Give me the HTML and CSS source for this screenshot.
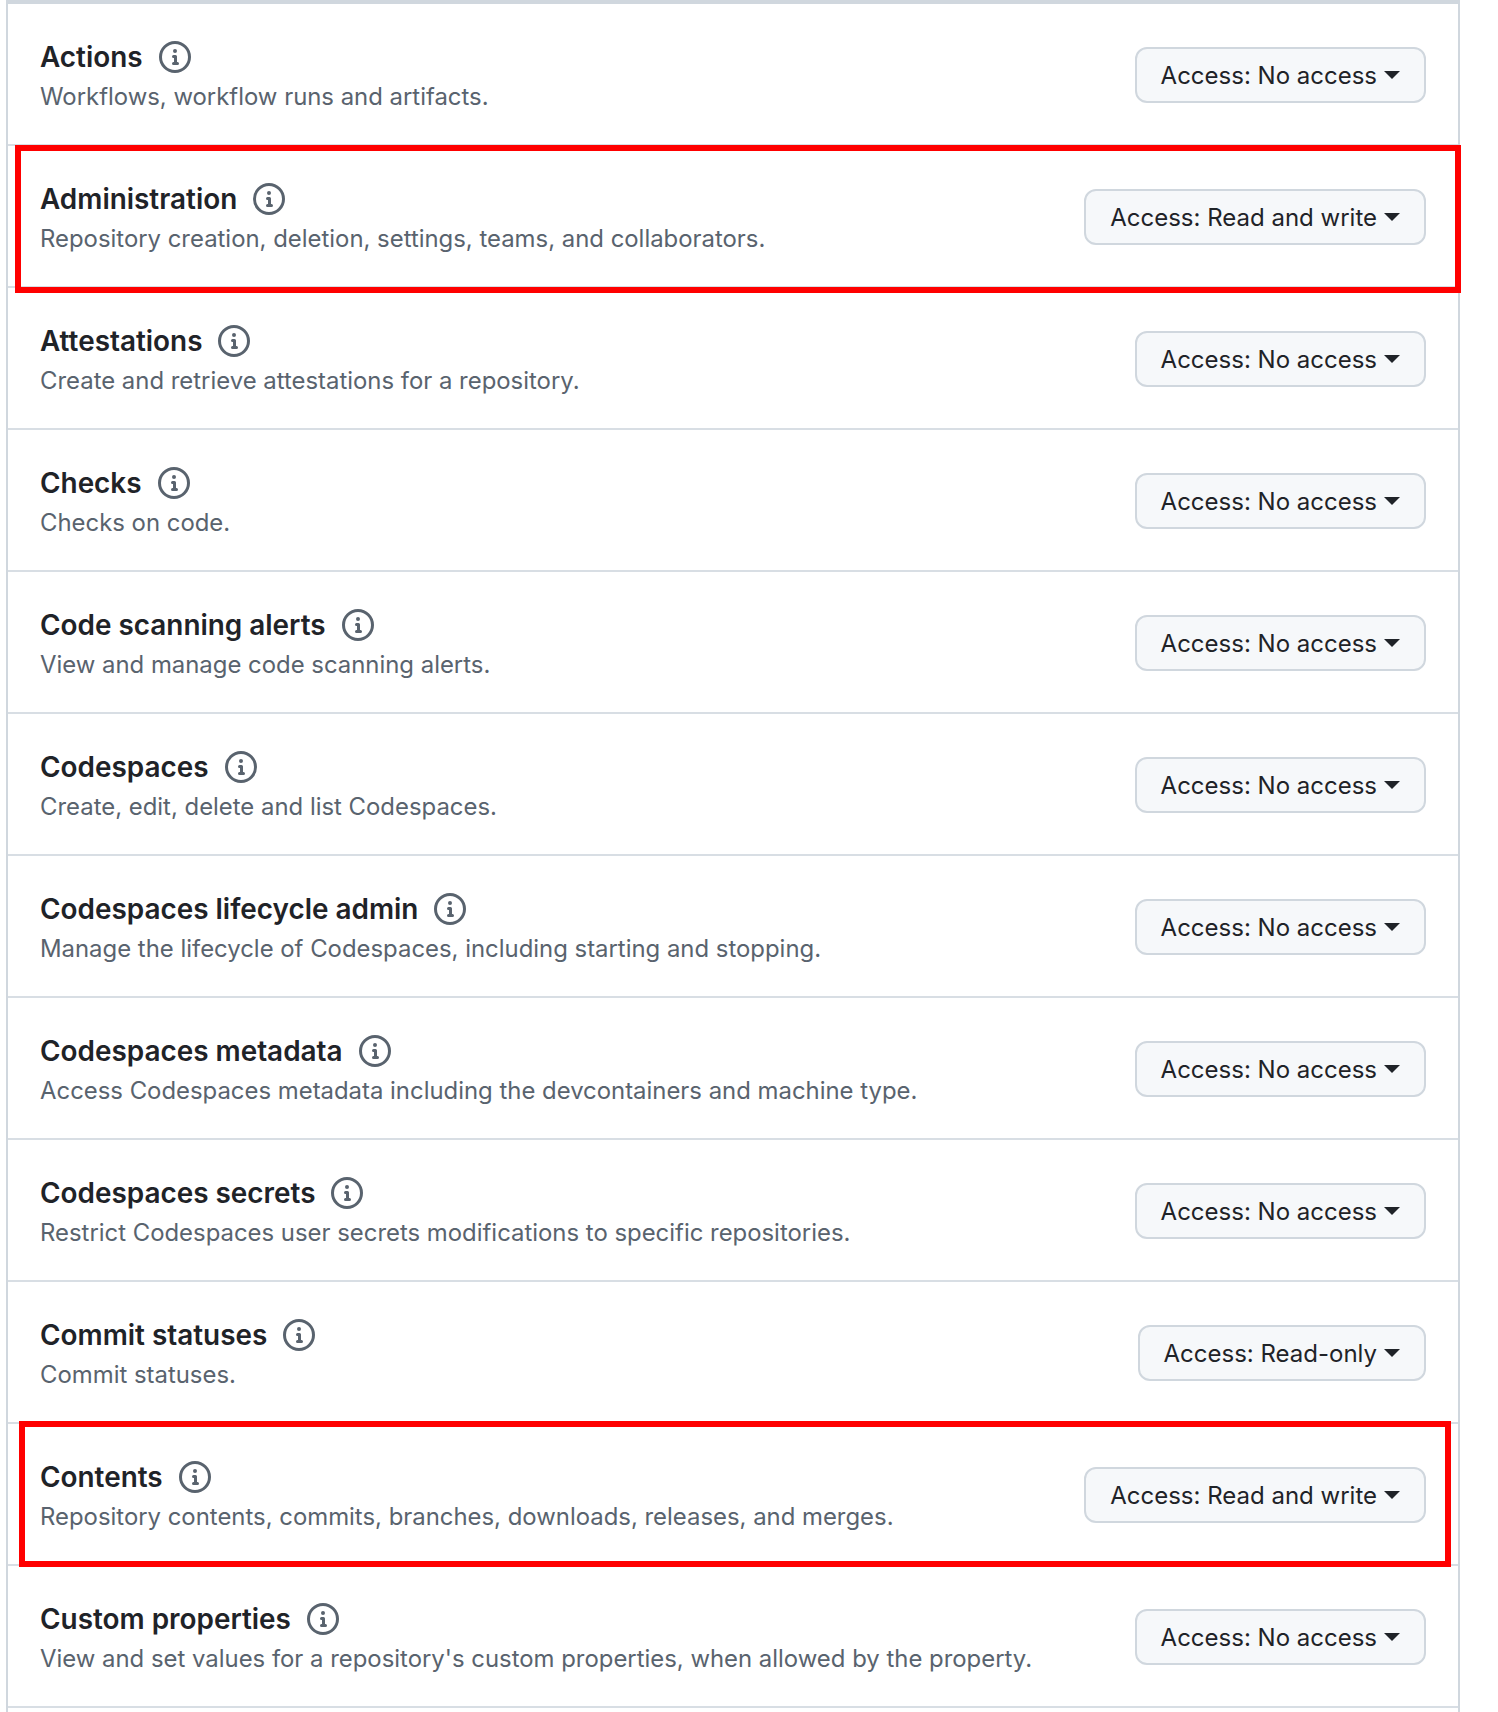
FILE: index.html
```html
<!DOCTYPE html>
<html lang="en">
<head>
  <meta charset="UTF-8" />
  <title>Repository permissions</title>
  <meta name="viewport" content="width=device-width, initial-scale=1" />
  <link rel="stylesheet" href="styles.css">
</head>
<body>
  <svg class="defs" aria-hidden="true">
    <symbol id="info" viewBox="0 0 16 16">
      <path d="M0 8a8 8 0 1 1 16 0A8 8 0 0 1 0 8Zm8-6.5a6.5 6.5 0 1 0 0 13 6.5 6.5 0 0 0 0-13ZM6.5 7.75A.75.75 0 0 1 7.25 7h1a.75.75 0 0 1 .75.75v2.75h.25a.75.75 0 0 1 0 1.5h-2a.75.75 0 0 1 0-1.5h.25v-2h-.25a.75.75 0 0 1-.75-.75ZM8 6a1 1 0 1 1 0-2 1 1 0 0 1 0 2Z"></path>
    </symbol>
  </svg>

  <div class="permissions">
    <div class="perm-row">
      <div class="perm-text">
        <div class="perm-title">Actions <svg class="info-icon"><use href="#info"></use></svg></div>
        <div class="perm-desc">Workflows, workflow runs and artifacts.</div>
      </div>
      <button class="access-btn">Access: No access<span class="caret"></span></button>
    </div>
    <div class="perm-row">
      <div class="perm-text">
        <div class="perm-title">Administration <svg class="info-icon"><use href="#info"></use></svg></div>
        <div class="perm-desc">Repository creation, deletion, settings, teams, and collaborators.</div>
      </div>
      <button class="access-btn">Access: Read and write<span class="caret"></span></button>
    </div>
    <div class="perm-row">
      <div class="perm-text">
        <div class="perm-title">Attestations <svg class="info-icon"><use href="#info"></use></svg></div>
        <div class="perm-desc">Create and retrieve attestations for a repository.</div>
      </div>
      <button class="access-btn">Access: No access<span class="caret"></span></button>
    </div>
    <div class="perm-row">
      <div class="perm-text">
        <div class="perm-title">Checks <svg class="info-icon"><use href="#info"></use></svg></div>
        <div class="perm-desc">Checks on code.</div>
      </div>
      <button class="access-btn">Access: No access<span class="caret"></span></button>
    </div>
    <div class="perm-row">
      <div class="perm-text">
        <div class="perm-title">Code scanning alerts <svg class="info-icon"><use href="#info"></use></svg></div>
        <div class="perm-desc">View and manage code scanning alerts.</div>
      </div>
      <button class="access-btn">Access: No access<span class="caret"></span></button>
    </div>
    <div class="perm-row">
      <div class="perm-text">
        <div class="perm-title">Codespaces <svg class="info-icon"><use href="#info"></use></svg></div>
        <div class="perm-desc">Create, edit, delete and list Codespaces.</div>
      </div>
      <button class="access-btn">Access: No access<span class="caret"></span></button>
    </div>
    <div class="perm-row">
      <div class="perm-text">
        <div class="perm-title">Codespaces lifecycle admin <svg class="info-icon"><use href="#info"></use></svg></div>
        <div class="perm-desc">Manage the lifecycle of Codespaces, including starting and stopping.</div>
      </div>
      <button class="access-btn">Access: No access<span class="caret"></span></button>
    </div>
    <div class="perm-row">
      <div class="perm-text">
        <div class="perm-title">Codespaces metadata <svg class="info-icon"><use href="#info"></use></svg></div>
        <div class="perm-desc">Access Codespaces metadata including the devcontainers and machine type.</div>
      </div>
      <button class="access-btn">Access: No access<span class="caret"></span></button>
    </div>
    <div class="perm-row">
      <div class="perm-text">
        <div class="perm-title">Codespaces secrets <svg class="info-icon"><use href="#info"></use></svg></div>
        <div class="perm-desc">Restrict Codespaces user secrets modifications to specific repositories.</div>
      </div>
      <button class="access-btn">Access: No access<span class="caret"></span></button>
    </div>
    <div class="perm-row">
      <div class="perm-text">
        <div class="perm-title">Commit statuses <svg class="info-icon"><use href="#info"></use></svg></div>
        <div class="perm-desc">Commit statuses.</div>
      </div>
      <button class="access-btn">Access: Read-only<span class="caret"></span></button>
    </div>
    <div class="perm-row">
      <div class="perm-text">
        <div class="perm-title">Contents <svg class="info-icon"><use href="#info"></use></svg></div>
        <div class="perm-desc">Repository contents, commits, branches, downloads, releases, and merges.</div>
      </div>
      <button class="access-btn">Access: Read and write<span class="caret"></span></button>
    </div>
    <div class="perm-row">
      <div class="perm-text">
        <div class="perm-title">Custom properties <svg class="info-icon"><use href="#info"></use></svg></div>
        <div class="perm-desc">View and set values for a repository's custom properties, when allowed by the property.</div>
      </div>
      <button class="access-btn">Access: No access<span class="caret"></span></button>
    </div>

    <!-- red annotations drawn over the list -->
    <div class="mark mark-admin"></div>
    <div class="mark mark-contents"></div>
  </div>
</body>
</html>
```

FILE: styles.css
```css
html, body {
  margin: 0;
  padding: 0;
  height: 1712px;
  overflow: hidden;
  background-color: #fff;
}

body {
  font-family: Inter, "Noto Sans", sans-serif;
  color: #1f2328;
}

.defs {
  display: none;
}

.permissions {
  position: relative;
  box-sizing: border-box;
  width: 1454px;
  height: 1712px;
  margin-left: 6px;
  border-top: 4px solid #d0d7de;
  border-left: 2px solid #d0d7de;
  border-right: 2px solid #d0d7de;
}

.perm-row {
  box-sizing: border-box;
  display: flex;
  align-items: center;
  justify-content: space-between;
  height: 142px;
  padding: 0 32px;
  border-bottom: 2px solid #d8dee4;
}

.perm-text {
  padding-top: 6px;
}

.perm-title {
  display: flex;
  align-items: center;
  gap: 16px;
  height: 32px;
  font-size: 27.9px;
  font-weight: 600;
}

.perm-desc {
  margin-top: 8px;
  font-size: 23.9px;
  line-height: 32px;
  color: #59636e;
}

.info-icon {
  width: 32px;
  height: 32px;
  fill: #59636e;
}

.access-btn {
  box-sizing: border-box;
  display: flex;
  align-items: center;
  height: 56px;
  margin-top: 2px;
  padding: 0 24px;
  border: 2px solid #d0d7de;
  border-radius: 12px;
  background-color: #f6f8fa;
  color: #1f2328;
  font-family: inherit;
  font-size: 24px;
  font-weight: 400;
  cursor: pointer;
}

.caret {
  width: 0;
  height: 0;
  margin-left: 7px;
  border-top: 8px solid #1f2328;
  border-left: 8px solid transparent;
  border-right: 8px solid transparent;
}

.mark {
  position: absolute;
  box-sizing: border-box;
  border: 6px solid #ff0000;
}

.mark-admin {
  left: 7px;
  top: 141px;
  width: 1446px;
  height: 148px;
}

.mark-contents {
  left: 11px;
  top: 1417px;
  width: 1432px;
  height: 146px;
}
```
